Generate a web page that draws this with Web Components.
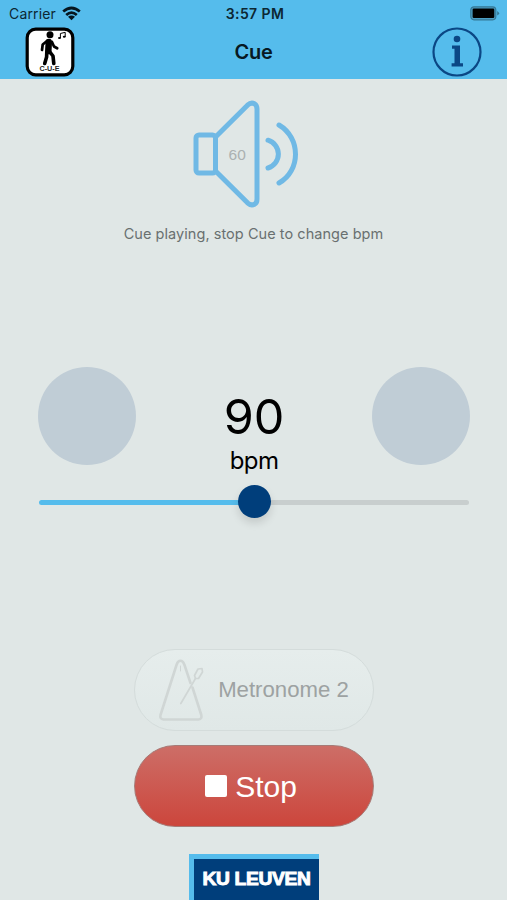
<!DOCTYPE html>
<html lang="en">
<head>
<meta charset="utf-8">
<title>Cue</title>
<style>
html,body{margin:0;height:100%;overflow:hidden;background:#e0e7e6}
</style>
</head>
<body>
<cue-app></cue-app>
<script>
const define = (name, html) => customElements.define(name, class extends HTMLElement {
  constructor() {
    super();
    this.attachShadow({mode: 'open'}).innerHTML = html;
  }
});

define('status-bar', `<style>
:host{display:grid;grid-template-columns:1fr auto 1fr;align-items:center;height:26px;padding:1px 7px 0 9px;box-sizing:border-box;color:#0c2733;font-size:14px;line-height:18px}
.left{display:flex;align-items:center;gap:6px;letter-spacing:.15px}
.left svg{margin-top:-1px}
.time{font-weight:600;font-size:14px;letter-spacing:.4px;margin-right:-1px}
.right{display:flex;justify-content:flex-end}
svg{display:block}
</style>
<div class="left"><span>Carrier</span><svg width="19" height="15" viewBox="0 0 19 15"><g fill="none" stroke="#06161f" stroke-width="2.7"><path d="M1.2 5.6Q9.5-1.6 17.8 5.6"/><path d="M4.2 8.9Q9.5 4.2 14.8 8.9"/></g><path d="M6 10.8Q9.500 8 13 10.800L9.500 14.300Z" fill="#06161f"/></svg></div>
<span class="time">3:57 PM</span>
<div class="right"><svg width="30" height="15" viewBox="0 0 30 15"><rect x=".8" y=".8" width="25" height="13" rx="3.200" fill="#4c9fc5" stroke="#357896" stroke-width="1.200"/><rect x="2.600" y="2.600" width="21.700" height="9.400" rx="1.200" fill="#000"/><path d="M27.200 5Q31 7.300 27.200 9.600Z" fill="#357896"/></svg></div>`);

define('nav-bar', `<style>
:host{display:grid;grid-template-columns:1fr auto 1fr;align-items:center;height:51px;padding:0 25px;box-sizing:border-box}
h1{margin:0;font-size:20px;line-height:24px;font-weight:600;color:#071923;letter-spacing:-.2px;padding-top:1px}
svg{display:block}.end{justify-self:end}
text{font:bold 7px "Liberation Sans",Arial,sans-serif}
</style>
<svg width="50" height="50" viewBox="0 0 50 50">
<rect x="2.200" y="2.200" width="45.600" height="45.600" rx="8.500" fill="#fff" stroke="#000" stroke-width="3.200"/>
<circle cx="25" cy="7.800" r="3.500"/>
<g fill="none" stroke="#000" stroke-linecap="round" stroke-linejoin="round">
<path d="M22 14L17.700 17.500L17 23" stroke-width="2.700"/><path d="M27 15L29 19.500L32.200 21.300" stroke-width="2.700"/>
<path d="M23.800 15L23.300 24" stroke-width="6.500"/><path d="M21.800 25L21.600 30L19.700 36.500" stroke-width="3.600"/><path d="M24.500 24.500L28 29L28.800 36.500" stroke-width="3.600"/>
<path d="M35.400 11V6.500L40.200 5.300V9.700" stroke-width="1"/></g>
<ellipse cx="34.400" cy="11.100" rx="1.400" ry="1"/><ellipse cx="39.200" cy="9.800" rx="1.400" ry="1"/>
<text x="14.500" y="44.300" textLength="20" lengthAdjust="spacingAndGlyphs" fill="#222">C-U-E</text>
</svg>
<h1>Cue</h1>
<svg class="end" width="50" height="50" viewBox="0 0 50 50"><circle cx="25" cy="25" r="23.500" fill="none" stroke="#0b4785" stroke-width="2.200"/><circle cx="25" cy="12" r="3.300" fill="#0b4785"/><path d="M20 18.500H28V36.300H31V39.500H19.600V36.300H22.500V21.700H20Z" fill="#0b4785"/></svg>`);

define('sound-indicator', `<style>
:host{display:grid;width:108px;height:110px}
svg,span{grid-area:1/1}
svg{display:block}
span{justify-self:start;align-self:center;padding-left:37px;color:#abb1b1;font:15.500px/18px "Liberation Sans",Arial,sans-serif;letter-spacing:.2px}
</style>
<svg width="108" height="110" viewBox="0 0 108 110"><g fill="none" stroke="#70b9e5" stroke-width="5" stroke-linecap="round" stroke-linejoin="round"><rect x="4" y="35" width="19.500" height="38" rx="3"/><path d="M23.500 37L55.500 5.200Q59 2 62.500 3.800Q65 5.500 65 9V99Q65 103 62.500 104.200Q59 106 55.500 102.800L23.500 71"/><path d="M76 40.200A14.500 14.500 0 0 1 76 68"/><path d="M87 25C109 38 109 70.500 87 83"/></g></svg>
<span><slot></slot></span>`);

define('beat-dot', `<style>:host{display:block;width:98px;height:98px;border-radius:50%;background:#c0cdd6}</style>`);

define('tempo-display', `<style>
:host{display:flex;justify-content:space-between;padding:0 37px 0 38px;height:111px}
.value{display:flex;flex-direction:column;align-items:center;padding-top:21px;color:#000}
b{font-weight:400;font-size:48.500px;line-height:58px;letter-spacing:-.2px}
i{font-style:normal;font-size:24px;line-height:30px;letter-spacing:-.6px}
</style>
<beat-dot></beat-dot><div class="value"><b>90</b><i>bpm</i></div><beat-dot></beat-dot>`);

define('tempo-slider', `<style>
:host{display:grid;align-items:center;height:34px;margin:0 38px 0 39px}
.track{grid-area:1/1;height:5px;border-radius:3px;background:linear-gradient(90deg,#55bcec 50%,#c8cece 50%);margin-top:2px}
.thumb{grid-area:1/1;justify-self:center;width:33px;height:33px;border-radius:50%;background:#003e7b;box-shadow:0 5px 9px #00000020}
</style><div class="track"></div><div class="thumb"></div>`);

define('pill-button', `<style>
:host{display:flex;align-items:center;justify-content:center;box-sizing:border-box;width:240px;height:82px;border-radius:42px;font-family:"Liberation Sans",Arial,sans-serif}
:host([kind=sound]){border:1.500px solid #d4dcdb;background:linear-gradient(#e6edec,#e0e8e7);color:#9da2a2;font-size:22.200px;gap:14px}
:host([kind=stop]){border:1.500px solid #a67b77;background:linear-gradient(#cd6e67,#cc463c);color:#fff;font-size:30px;gap:8px;padding:2px 5px 0 0}
</style><slot name="icon"></slot><slot></slot>`);

define('metronome-icon', `<style>:host{display:block}svg{display:block}</style>
<svg width="46" height="64" viewBox="0 0 46 64" fill="none" stroke="#d0d6d5" stroke-linecap="round" stroke-linejoin="round"><path d="M34.500 29.500L43.300 57Q44.300 61 40.500 61.500H5.500Q1.500 61 2.500 57L18.500 7Q19.800 2.800 22.500 2.800Q25 2.800 26.500 7L32.500 25" stroke-width="2.600"/><path d="M22.500 8V13" stroke-width="1"/><path d="M22.800 45.500L37.500 20.500" stroke-width="1.700"/><path d="M37.500 20.500L36.500 17.500L40 11L44 10.500L44.500 14L40.500 20.500Z" stroke-width="1.700"/></svg>`);

define('stop-icon', `<style>:host{display:block;width:22px;height:22px;border-radius:2px;background:#fff;margin-top:-2px}</style>`);

define('ku-logo', `<style>
:host{display:flex;align-items:center;justify-content:center;box-sizing:border-box;width:130px;height:46px;border-top:5px solid #55bcec;border-left:5px solid #55bcec;background:#003e7b;color:#fff;font:bold 19.200px/22px "Liberation Sans",Arial,sans-serif;-webkit-text-stroke:1px #fff;letter-spacing:-.3px;white-space:nowrap}
</style><span>KU LEUVEN</span>`);

define('cue-app', `<style>
:host{display:flex;flex-direction:column;width:507px;height:900px;overflow:hidden;background:#e0e7e6;font-family:Inter,"Liberation Sans",sans-serif}
header{height:79px;flex:none;background:#55bcec}
main{flex:1;display:flex;flex-direction:column;min-height:0}
sound-indicator{margin:21px 0 0 191.500px}
p{margin:14px 0 0;text-align:center;font-size:14.500px;line-height:20px;color:#697070;letter-spacing:.05px}
tempo-display{margin-top:123px}
tempo-slider{margin-top:6px}
.actions{display:flex;flex-direction:column;align-items:center;gap:14px;margin-top:130.500px}
ku-logo{margin:27px 0 0 189px}
</style>
<header><status-bar></status-bar><nav-bar></nav-bar></header>
<main>
<sound-indicator>60</sound-indicator>
<p>Cue playing, stop Cue to change bpm</p>
<tempo-display></tempo-display>
<tempo-slider></tempo-slider>
<div class="actions">
<pill-button kind="sound"><metronome-icon slot="icon"></metronome-icon>Metronome 2</pill-button>
<pill-button kind="stop"><stop-icon slot="icon"></stop-icon>Stop</pill-button>
</div>
<ku-logo></ku-logo>
</main>`);
</script>
</body>
</html>
